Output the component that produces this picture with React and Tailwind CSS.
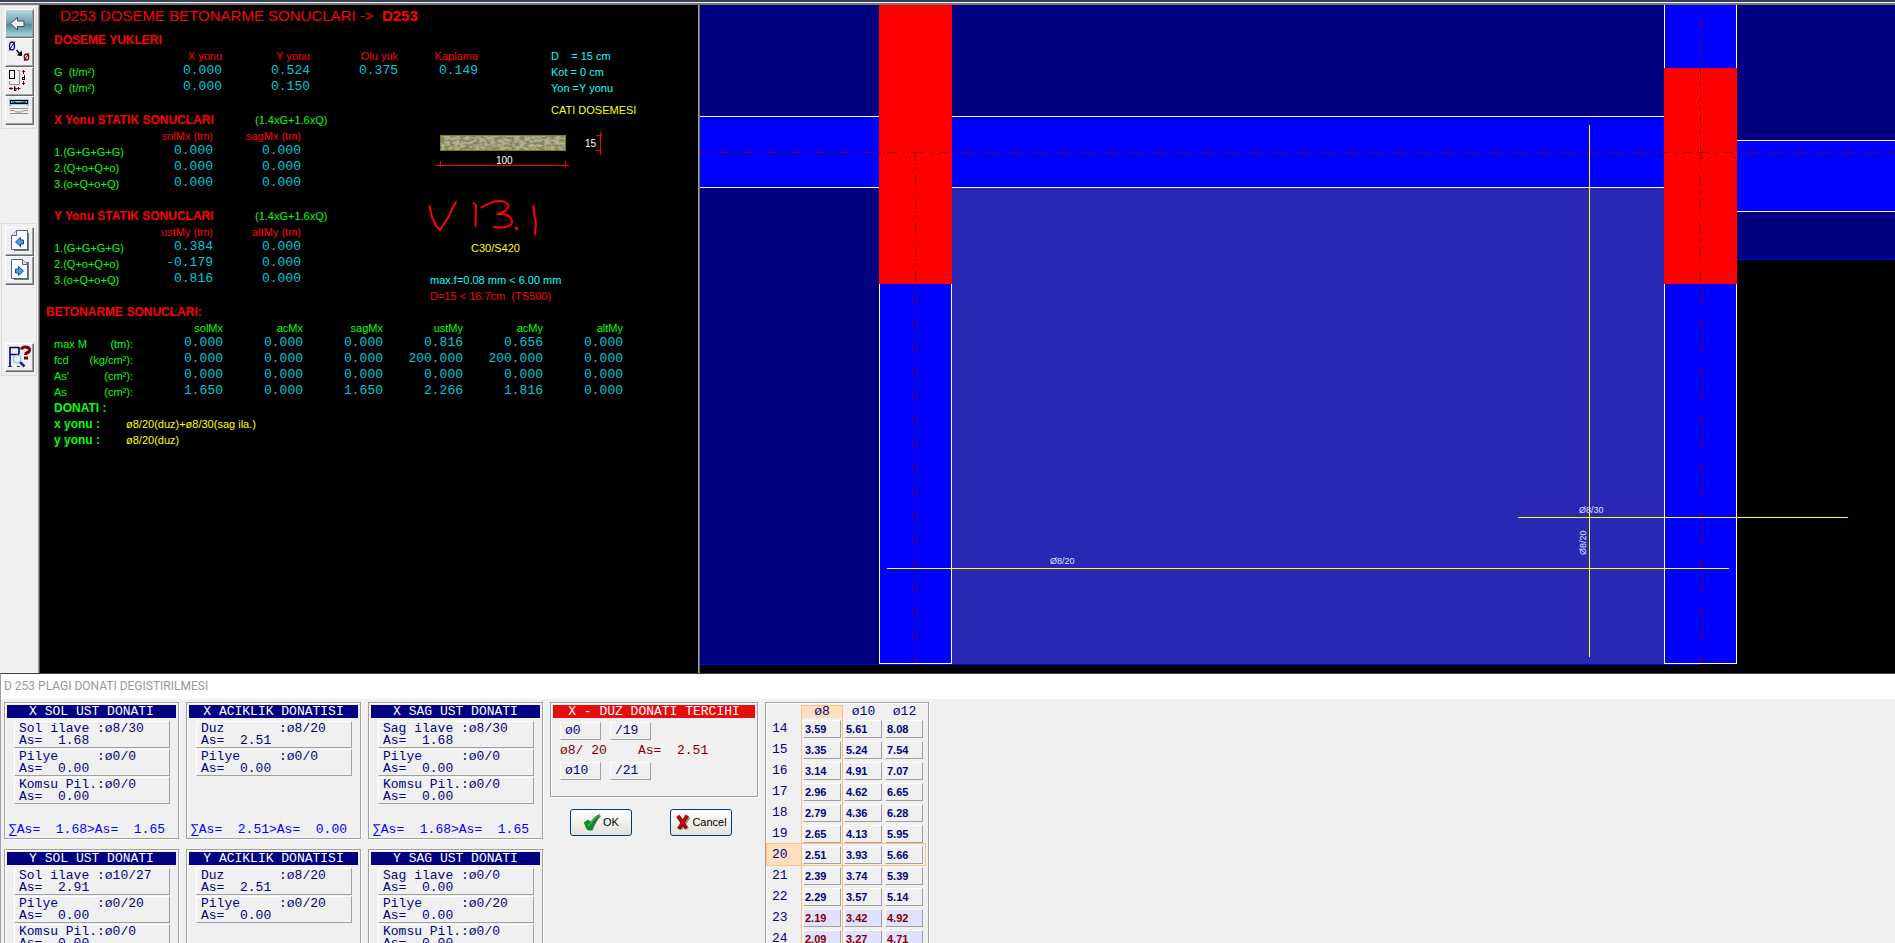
import clsx from 'clsx';

const sans = "font-['Liberation_Sans',Arial,sans-serif] text-[11px]";
const heading = 'text-[12px] font-bold';
const mono = "font-['Liberation_Mono',monospace] text-[13px]";

const loadColumns = ['X yonu', 'Y yonu', 'Olu yuk', 'Kaplama'];
const loadRows = [
    { label: 'G  (t/m²)', values: ['0.000', '0.524', '0.375', '0.149'] },
    { label: 'Q  (t/m²)', values: ['0.000', '0.150', '', ''] },
];

const staticResults = [
    {
        title: 'X Yonu STATIK SONUCLARI',
        columns: ['solMx (tm)', 'sagMx (tm)'],
        rows: [
            { label: '1.(G+G+G+G)', values: ['0.000', '0.000'] },
            { label: '2.(Q+o+Q+o)', values: ['0.000', '0.000'] },
            { label: '3.(o+Q+o+Q)', values: ['0.000', '0.000'] },
        ],
    },
    {
        title: 'Y Yonu STATIK SONUCLARI',
        columns: ['ustMy (tm)', 'altMy (tm)'],
        rows: [
            { label: '1.(G+G+G+G)', values: ['0.384', '0.000'] },
            { label: '2.(Q+o+Q+o)', values: ['-0.179', '0.000'] },
            { label: '3.(o+Q+o+Q)', values: ['0.816', '0.000'] },
        ],
    },
];

const concreteColumns = ['solMx', 'acMx', 'sagMx', 'ustMy', 'acMy', 'altMy'];
const concreteRows = [
    { label: 'max M', unit: '(tm):', values: ['0.000', '0.000', '0.000', '0.816', '0.656', '0.000'] },
    { label: 'fcd', unit: '(kg/cm²):', values: ['0.000', '0.000', '0.000', '200.000', '200.000', '0.000'] },
    { label: "As'", unit: '(cm²):', values: ['0.000', '0.000', '0.000', '0.000', '0.000', '0.000'] },
    { label: 'As', unit: '(cm²):', values: ['1.650', '0.000', '1.650', '2.266', '1.816', '0.000'] },
];

const rebarPanels = [
    {
        title: 'X SOL UST DONATI',
        items: [['Sol ilave :ø8/30', '1.68'], ['Pilye     :ø0/0', '0.00'], ['Komsu Pil.:ø0/0', '0.00']],
        total: '∑As=  1.68>As=  1.65',
    },
    {
        title: 'X ACIKLIK DONATISI',
        items: [['Duz       :ø8/20', '2.51'], ['Pilye     :ø0/0', '0.00']],
        total: '∑As=  2.51>As=  0.00',
    },
    {
        title: 'X SAG UST DONATI',
        items: [['Sag ilave :ø8/30', '1.68'], ['Pilye     :ø0/0', '0.00'], ['Komsu Pil.:ø0/0', '0.00']],
        total: '∑As=  1.68>As=  1.65',
    },
    {
        title: 'Y SOL UST DONATI',
        items: [['Sol ilave :ø10/27', '2.91'], ['Pilye     :ø0/20', '0.00'], ['Komsu Pil.:ø0/0', '0.00']],
    },
    {
        title: 'Y ACIKLIK DONATISI',
        items: [['Duz       :ø8/20', '2.51'], ['Pilye     :ø0/20', '0.00']],
    },
    {
        title: 'Y SAG UST DONATI',
        items: [['Sag ilave :ø0/0', '0.00'], ['Pilye     :ø0/20', '0.00'], ['Komsu Pil.:ø0/0', '0.00']],
    },
];

const diameters = ['ø8', 'ø10', 'ø12'];
const areaRows = [
    [14, '3.59', '5.61', '8.08'],
    [15, '3.35', '5.24', '7.54'],
    [16, '3.14', '4.91', '7.07'],
    [17, '2.96', '4.62', '6.65'],
    [18, '2.79', '4.36', '6.28'],
    [19, '2.65', '4.13', '5.95'],
    [20, '2.51', '3.93', '5.66'],
    [21, '2.39', '3.74', '5.39'],
    [22, '2.29', '3.57', '5.14'],
    [23, '2.19', '3.42', '4.92'],
    [24, '2.09', '3.27', '4.71'],
];

/* ---------- Toolbar ---------- */

function BackIcon() {
    return (
        <svg viewBox="0 0 27 27" className="h-full w-full">
            <defs>
                <linearGradient id="teal" x1="0" y1="0" x2="0" y2="1">
                    <stop offset="0" stopColor="#b9d6de" />
                    <stop offset="0.5" stopColor="#6fa3b1" />
                    <stop offset="0.55" stopColor="#4f8c9c" />
                    <stop offset="1" stopColor="#a9d3da" />
                </linearGradient>
            </defs>
            <rect width="26" height="26" fill="url(#teal)" />
            <path d="M4.500 13.500 L11.500 7.500 V11 H18 V16.500 H11.500 V20 Z" fill="#eef0f2" stroke="#3c4a50" strokeWidth="1" />
        </svg>
    );
}

function DiameterIcon() {
    return (
        <svg viewBox="0 0 27 27" className="h-full w-full" fill="none">
            <ellipse cx="6" cy="7" rx="2.500" ry="4" stroke="#000080" strokeWidth="1.300" />
            <path d="M3 11.500 L9 2.500" stroke="#000080" />
            <path d="M10.500 11 L14 15" stroke="#000" strokeWidth="1.500" />
            <path d="M16 17 L16 11.500 L11 16.500 Z" fill="#000" />
            <ellipse cx="20.500" cy="18" rx="2.200" ry="3" stroke="#800000" strokeWidth="1.300" />
            <path d="M18 22 L23 14" stroke="#800000" />
        </svg>
    );
}

function DimensionIcon() {
    return (
        <svg viewBox="0 0 27 27" className="h-full w-full" fill="none">
            <rect x="3.500" y="2.500" width="5" height="8" stroke="#000" />
            <path d="M11 2.500 H13.500 V16.500 H3.500 V13" stroke="#909090" />
            <path d="M17.500 2 V6 M16 3.500 H19 M17.500 13 V17 M16 15.500 H19" stroke="#800000" />
            <path d="M18.500 7 V12 M18.500 9.500 H16.500 V11.500 H18.500" stroke="#000" />
            <path d="M3 20.500 H7 M5 19 V22 M10.500 20.500 H14.500 M12.500 19 V22" stroke="#800000" />
            <path d="M8.500 18 V22.500 H10 V20 H8" stroke="#000" />
        </svg>
    );
}

function BeamIcon() {
    return (
        <svg viewBox="0 0 27 27" className="h-full w-full" fill="none">
            <path d="M3 2 H23 V9 H20 V8 H6 V9 H3 Z" fill="#8cc8f0" />
            <rect x="4.500" y="3.500" width="17" height="3" stroke="#000" />
            <path d="M6 5 H9 L10.500 6 H15 L16.500 5 H20" stroke="#000" />
            <path d="M4 11.500 H22 M4 16.500 H22" stroke="#909090" />
            <path d="M4 13.500 H8 L9.500 15 H16 L17.500 13.500 H22" stroke="#909090" />
        </svg>
    );
}

function PageIcon({ forward }) {
    return (
        <svg viewBox="0 0 27 27" className="h-full w-full" fill="none">
            <path d="M7 5 H23 V23 H8 Z" fill="#707880" />
            {forward ? (
                <>
                    <path d="M5.500 2.500 H16.500 L21.500 7.500 V21.500 H5.500 Z" fill="#fff" stroke="#49648c" />
                    <path d="M16.500 2.500 V7.500 H21.500" fill="#dfe6ee" stroke="#49648c" />
                    <path d="M17.500 14 L12.500 9.500 V12 H9.500 V16 H12.500 V18.500 Z" fill="#4f9be8" stroke="#17489c" />
                </>
            ) : (
                <>
                    <path d="M10.500 2.500 H21.500 V21.500 H5.500 V7.500 Z" fill="#fff" stroke="#49648c" />
                    <path d="M10.500 2.500 V7.500 H5.500" fill="#dfe6ee" stroke="#49648c" />
                    <path d="M9.500 14 L14.500 9.500 V12 H17.500 V16 H14.500 V18.500 Z" fill="#4f9be8" stroke="#17489c" />
                </>
            )}
        </svg>
    );
}

function QueryIcon() {
    return (
        <svg viewBox="0 0 27 27" className="h-full w-full" fill="none">
            <path d="M4 3 V23 M13 3 V10 M4 3.500 H13 M4 10.500 H13" stroke="#000080" strokeWidth="1.600" />
            <path d="M2 22.500 H6 M11 22.500 H14" stroke="#404040" />
            <path d="M15.500 5.500 Q16 3 19.500 3 Q23.500 3 23.500 6 Q23.500 8 21.500 8.500 Q19.500 9.300 19.500 11" stroke="#800000" strokeWidth="3" />
            <rect x="18" y="12.500" width="4" height="3" fill="#800000" />
            <path d="M14 18 L18.500 22.500" stroke="#0b2fa8" strokeWidth="2.600" />
            <circle cx="11" cy="15" r="4" fill="#d6f2fb" stroke="#8cb8d8" />
        </svg>
    );
}

function ToolButton({ label, children }) {
    return (
        <button
            type="button"
            aria-label={label}
            className="block h-[29px] w-[29px] border border-t-white border-r-[#696969] border-b-[#696969] border-l-white bg-[#f0f0f0] shadow-[inset_-1px_-1px_0_#a0a0a0]"
        >
            {children}
        </button>
    );
}

function Toolbar() {
    return (
        <nav className="flex w-[38px] shrink-0 flex-col gap-[94px] bg-[#f0f0f0] pl-px">
            <div className="w-9 border border-[#dcdcdc] p-[3px]">
                <ToolButton label="Geri"><BackIcon /></ToolButton>
                <ToolButton label="Cap degistir"><DiameterIcon /></ToolButton>
                <ToolButton label="Boyut"><DimensionIcon /></ToolButton>
                <ToolButton label="Kiris"><BeamIcon /></ToolButton>
            </div>
            <div className="w-9 border border-[#dcdcdc] p-[3px]">
                <ToolButton label="Onceki"><PageIcon /></ToolButton>
                <ToolButton label="Sonraki"><PageIcon forward /></ToolButton>
                <div className="h-[58px]" />
                <ToolButton label="Sorgu"><QueryIcon /></ToolButton>
            </div>
        </nav>
    );
}

/* ---------- Result report ---------- */

function ValueCell({ children }) {
    return (
        <td className={clsx(mono, 'p-0 pb-[3px] text-right leading-[13px] text-[#00c8d8]')}>{children}</td>
    );
}

function StaticTable({ result }) {
    return (
        <section className="pb-4">
            <div className="flex">
                <h2 className={clsx(heading, 'w-[201px] text-[#ff0000]')}>{result.title}</h2>
                <span className="text-[#00ff00]">(1.4xG+1.6xQ)</span>
            </div>
            <table className="table-fixed border-collapse">
                <thead>
                    <tr className="h-4 text-[#ff0000]">
                        <td className="w-[71px] p-0" />
                        {result.columns.map(column => (
                            <th key={column} className="w-[88px] p-0 text-right font-normal">{column}</th>
                        ))}
                    </tr>
                </thead>
                <tbody>
                    {result.rows.map(row => (
                        <tr key={row.label} className="h-4">
                            <th className="p-0 text-left font-normal text-[#00ff00]">{row.label}</th>
                            {row.values.map((value, i) => <ValueCell key={i}>{value}</ValueCell>)}
                        </tr>
                    ))}
                </tbody>
            </table>
        </section>
    );
}

function SectionFigure() {
    return (
        <svg viewBox="428 124 200 116" className="h-[116px] w-[200px]" fill="none">
            <defs>
                <filter id="grain" x="0" y="0" width="1" height="1" colorInterpolationFilters="sRGB">
                    <feTurbulence type="fractalNoise" baseFrequency="0.2 0.4" numOctaves="3" seed="4" />
                    <feColorMatrix values="0 0 0 0 0.4  0 0 0 0 0.42  0 0 0 0 0.28  5 0 0 0 -2.1" />
                </filter>
            </defs>
            <rect x="440" y="135" width="126" height="16" fill="#b2b08c" />
            <rect x="440" y="135" width="126" height="16" fill="#000" filter="url(#grain)" opacity="0.6" />
            <rect x="440.500" y="135.500" width="125" height="15" stroke="#808000" />
            <g stroke="#ff0000">
                <path d="M436 165.500 H569 M440.500 161 V167 M565.500 161 V167" />
                <path d="M600.500 132 V155 M596 135.500 H602 M596 150.500 H602" />
            </g>
            <g className="fill-white text-[10px]">
                <text x="496" y="164">100</text>
                <text x="585" y="147">15</text>
            </g>
            {/* hand written version note */}
            <g stroke="#ff0000" strokeWidth="2" strokeLinecap="round" strokeLinejoin="round">
                <path d="M429.500 206 L432 217 L436 226 L440 230 L445 222 L449 216 L452 209 L456 202" />
                <path d="M473.500 203 L476 205 L475.500 226" />
                <path d="M481.500 207.500 Q490 202 498 201 Q508 201 508.500 206 Q507 212 497.500 214 Q511 213 512 222 Q511 229 494 227" />
                <path d="M516 228 L517 228.500" strokeWidth="3" />
                <path d="M533.500 206 Q534 216 536 224 L535 234" />
            </g>
        </svg>
    );
}

function Report() {
    return (
        <section className={clsx(sans, 'w-[658px] shrink-0 bg-black pl-[14px] leading-4 whitespace-pre')}>
            <h1 className="pt-[2px] pb-[7px] pl-[6px] text-[15px] leading-[18px] text-[#ff0000]">
                D253 DOSEME BETONARME SONUCLARI -&gt;  <b>D253</b>
            </h1>

            <div className="flex">
                <div className="w-[497px]">
                    <h2 className={clsx(heading, 'text-[#ff0000]')}>DOSEME YUKLERI</h2>
                    <table className="table-fixed border-collapse">
                        <thead>
                            <tr className="h-4 text-[#ff0000]">
                                <td className="w-20 p-0" />
                                {loadColumns.map(column => (
                                    <th key={column} className="w-[88px] p-0 text-right font-normal last:w-20">{column}</th>
                                ))}
                            </tr>
                        </thead>
                        <tbody>
                            {loadRows.map(row => (
                                <tr key={row.label} className="h-4">
                                    <th className="p-0 text-left font-normal text-[#00ff00]">{row.label}</th>
                                    {row.values.map((value, i) => <ValueCell key={i}>{value}</ValueCell>)}
                                </tr>
                            ))}
                        </tbody>
                    </table>
                </div>
                <div className="-mb-2 pt-4 text-[#00ffff]">
                    <p>D    = 15 cm</p>
                    <p>Kot = 0 cm</p>
                    <p>Yon =Y yonu</p>
                    <p className="pt-[6px] text-[#ffff00]">CATI DOSEMESI</p>
                </div>
            </div>

            <div className="flex pt-[2px]">
                <div className="w-[374px]">
                    {staticResults.map(result => <StaticTable key={result.title} result={result} />)}
                </div>
                <div className="pt-3">
                    <SectionFigure />
                    <p className="pl-[43px] text-[#ffff00]">C30/S420</p>
                    <p className="pt-4 pl-[2px] text-[#00ffff]">max.f=0.08 mm &lt; 6.00 mm</p>
                    <p className="pl-[2px] text-[#ff0000]">D=15 &lt; 16.7cm  (TS500)</p>
                </div>
            </div>

            <h2 className={clsx(heading, '-ml-2 text-[#ff0000]')}>BETONARME SONUCLARI:</h2>
            <table className="table-fixed border-collapse text-[#00ff00]">
                <thead>
                    <tr className="h-4">
                        <td className="w-[32px] p-0" />
                        <td className="w-[56px] p-0" />
                        {concreteColumns.map(column => (
                            <th key={column} className="w-20 p-0 text-right font-normal">{column}</th>
                        ))}
                    </tr>
                </thead>
                <tbody>
                    {concreteRows.map(row => (
                        <tr key={row.label} className="h-4">
                            <th className="p-0 text-left font-normal">{row.label}</th>
                            <td className="p-0 pr-[10px] text-right">{row.unit}</td>
                            {row.values.map((value, i) => <ValueCell key={i}>{value}</ValueCell>)}
                        </tr>
                    ))}
                </tbody>
            </table>

            <h2 className={clsx(heading, 'text-[#00ff00]')}>DONATI :</h2>
            <dl className="grid grid-cols-[72px_auto] text-[#ffff00]">
                <dt className={clsx(heading, 'text-[#00ff00]')}>x yonu :</dt>
                <dd>ø8/20(duz)+ø8/30(sag ila.)</dd>
                <dt className={clsx(heading, 'text-[#00ff00]')}>y yonu :</dt>
                <dd>ø8/20(duz)</dd>
            </dl>
        </section>
    );
}

/* ---------- Plan drawing ---------- */

function Plan() {
    return (
        <div className="min-w-0 flex-1 overflow-hidden bg-black">
            <svg viewBox="700 5 1195 668" preserveAspectRatio="xMinYMin slice" className="block h-full w-full" shapeRendering="crispEdges" fill="none">
                {/* neighbouring slabs */}
                <rect x="700" y="5" width="1195" height="254" fill="#000080" />
                <rect x="700" y="188" width="179" height="476" fill="#000080" />
                <path d="M1737 259.500 H1895 M700 664.500 H1701" stroke="#0000ff" />
                {/* selected slab */}
                <rect x="952" y="188" width="712" height="476" fill="#2828b4" />

                {/* beams */}
                <rect x="700" y="116" width="964" height="72" fill="#0000ff" />
                <rect x="1737" y="140" width="158" height="72" fill="#0000ff" />
                <rect x="879" y="284" width="73" height="380" fill="#0000ff" />
                <rect x="1664" y="5" width="73" height="659" fill="#0000ff" />
                <path
                    d="M700 116.500 H1664 M700 187.500 H1664 M1737 140.500 H1895 M1737 211.500 H1895 M879.500 284 V663.500 H951.500 V284 M1664.500 5 V663.500 H1736.500 V5"
                    stroke="#fff"
                />

                {/* columns */}
                <rect x="879" y="5" width="73" height="279" fill="#ff0000" />
                <rect x="1664" y="68" width="73" height="216" fill="#ff0000" />

                {/* axes */}
                <g stroke="#800000" strokeDasharray="9 6 3 6">
                    <path d="M700 152.500 H915" strokeDashoffset="5" />
                    <path d="M915 152.500 H1700" />
                    <path d="M1700 152.500 H1895" />
                    <path d="M915.500 152 V663" />
                    <path d="M1700.500 5 V152" strokeDashoffset="9" />
                    <path d="M1700.500 152 V663" />
                </g>

                {/* bars */}
                <path d="M1589.500 125 V657 M1518 517.500 H1848 M887 568.500 H1729" stroke="#ffff00" />
                <g className="fill-[#e0e0ff] font-['Liberation_Sans'] text-[9px]">
                    <text x="1579" y="513">Ø8/30</text>
                    <text x="1050" y="564">Ø8/20</text>
                    <text transform="translate(1586 555) rotate(-90)">Ø8/20</text>
                </g>
            </svg>
        </div>
    );
}

/* ---------- Rebar dialog ---------- */

const groupBox = 'border border-[#a0a0a0] p-[2px] shadow-[inset_1px_1px_0_#fff,1px_1px_0_#fff]';
const raised = 'block border border-t-white border-r-[#a0a0a0] border-b-[#a0a0a0] border-l-white text-left';

function RebarPanel({ panel }) {
    return (
        <section className={clsx(groupBox, 'flex h-[137px] w-[175px] flex-col')}>
            <h3 className="h-[13px] bg-[#000080] text-center leading-[13px] text-white">{panel.title}</h3>
            <div className="flex-1 pt-[3px] pl-[7px]">
                {panel.items.map(([name, area]) => (
                    <button key={name} type="button" className={clsx(raised, 'mb-px h-[27px] w-[156px] pl-1 leading-3')}>
                        {name}
                        <br />
                        As=  {area}
                    </button>
                ))}
            </div>
            <p className="pl-[2px] leading-3 text-[#0000ff]">{panel.total}</p>
        </section>
    );
}

function ChoiceRow({ diameter, spacing }) {
    return (
        <div className="flex gap-[9px]">
            <button type="button" className={clsx(raised, 'h-[18px] w-[41px] pl-1 leading-4')}>{diameter}</button>
            <button type="button" className={clsx(raised, 'h-[18px] w-[41px] pl-1 leading-4')}>{spacing}</button>
        </div>
    );
}

function DialogButton({ children }) {
    return (
        <button
            type="button"
            className={clsx(sans, 'flex h-[27px] w-[62px] items-center justify-center gap-px rounded-[3px] border border-[#003c74] bg-linear-to-b from-white to-[#e4e2d8] text-black')}
        >
            {children}
        </button>
    );
}

function ChoicePanel() {
    return (
        <div>
            <section className={clsx(groupBox, 'h-[95px] w-[208px]')}>
                <h3 className="h-[13px] bg-[#e80c0c] text-center leading-[13px] text-white">X - DUZ DONATI TERCIHI</h3>
                <div className="pt-1 pl-[7px]">
                    <ChoiceRow diameter="ø0" spacing="/19" />
                    <p className="leading-[22px] text-[#800000]">ø8/ 20    As=  2.51</p>
                    <ChoiceRow diameter="ø10" spacing="/21" />
                </div>
            </section>
            <div className="flex gap-[38px] pt-3 pl-5">
                <DialogButton>
                    <svg viewBox="0 0 19 17" className="h-[17px] w-[19px]">
                        <path d="M2.500 9 L7 6.500 L9 9 Q12 3 18.500 1.500 Q13 7 9.500 16.500 L5.500 16.500 Z" fill="#606070" />
                        <path d="M1 8.500 L5 6 L7.500 9 Q11 2 17 0.500 Q11.500 6.500 8 15.500 L4 15.500 Z" fill="#009818" stroke="#00701c" strokeWidth="0.500" />
                        <path d="M5 12 Q8.500 8 14 2.500" stroke="#48e048" strokeWidth="1" fill="none" />
                    </svg>
                    OK
                </DialogButton>
                <DialogButton>
                    <svg viewBox="0 0 17 18" className="h-[17px] w-4">
                        <path d="M4 3 L13 16 M14.500 3 L6 16" stroke="#909090" strokeWidth="4" />
                        <path d="M3 2 L12 15 M13 1.500 L4 16" stroke="#a00000" strokeWidth="4" />
                        <path d="M3 2 L11 13 M13 2 L5 13" stroke="#d02020" strokeWidth="1" />
                    </svg>
                    Cancel
                </DialogButton>
            </div>
        </div>
    );
}

function AreaTable() {
    return (
        <section className={clsx(groupBox, 'w-[164px] pl-px')}>
            <table className="table-fixed border-separate border-spacing-0">
                <thead>
                    <tr>
                        <td className="w-[34px] p-0" />
                        {diameters.map((diameter, i) => (
                            <th
                                key={diameter}
                                className={clsx('h-[13px] w-[41px] p-0 leading-3 font-normal', i === 0 && 'w-[42px] border border-b-0 border-[#ffc080] bg-[#ffdfc0]')}
                            >
                                {diameter}
                            </th>
                        ))}
                    </tr>
                </thead>
                <tbody>
                    {areaRows.map(([spacing, ...areas]) => (
                        <tr key={spacing} className={clsx('h-[21px]', spacing === 20 && 'outline outline-[#ffc080]')}>
                            <th className={clsx('p-0 pl-[5px] text-left leading-4 font-normal', spacing === 20 && 'bg-[#ffdfc0]')}>{spacing}</th>
                            {areas.map((area, i) => (
                                <td key={area} className={clsx('p-0 pl-px', i === 0 && 'border-x border-[#ffc080]')}>
                                    <button
                                        type="button"
                                        className={clsx(
                                            raised,
                                            "h-[18px] w-[38px] pl-px font-['Liberation_Sans'] text-[11px] leading-4 font-bold",
                                            spacing > 22 && 'bg-[#e0e0ff] text-[#800000]',
                                        )}
                                    >
                                        {area}
                                    </button>
                                </td>
                            ))}
                        </tr>
                    ))}
                </tbody>
            </table>
        </section>
    );
}

function RebarDialog() {
    return (
        <section className={clsx(mono, 'h-[270px] shrink-0 overflow-hidden border-t border-l border-t-[#404040] border-l-[#a0a0a0] bg-[#f0f0f0] whitespace-pre text-[#000080]')}>
            <h2 className="h-[25px] bg-white pl-[3px] font-['Roboto'] text-[12px] leading-6 font-normal text-[#999999]">
                D 253 PLAGI DONATI DEGISTIRILMESI
            </h2>
            <div className="flex items-start gap-[7px] pt-[3px] pl-[3px]">
                <div className="grid grid-cols-[repeat(3,175px)] gap-x-[7px] gap-y-[10px]">
                    {rebarPanels.map(panel => <RebarPanel key={panel.title} panel={panel} />)}
                </div>
                <ChoicePanel />
                <AreaTable />
            </div>
        </section>
    );
}

export default function App() {
    return (
        <div className="flex h-screen flex-col overflow-hidden bg-[#f0f0f0]">
            <div className="h-[5px] shrink-0 border-t-2 border-b-2 border-t-[#34435a] border-b-[#7c7870] bg-[#f0f0f0]" />
            <main className="flex min-h-0 flex-1">
                <Toolbar />
                <div className="w-[2px] shrink-0 border-l border-[#a0a0a0] bg-[#505050]" />
                <Report />
                <div className="w-[2px] shrink-0 border-l border-[#a0a0a0] bg-[#696969]" />
                <Plan />
            </main>
            <RebarDialog />
        </div>
    );
}
